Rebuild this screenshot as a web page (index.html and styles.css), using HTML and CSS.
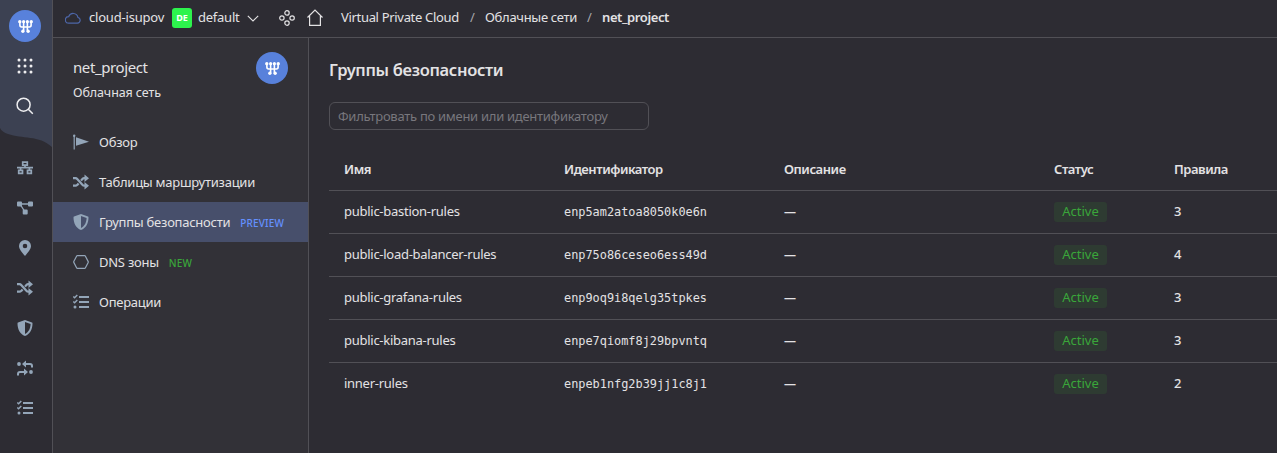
FILE: index.html
```html
<!DOCTYPE html>
<html lang="ru">
<head>
<meta charset="utf-8">
<title>Группы безопасности</title>
<link rel="stylesheet" href="styles.css">
</head>
<body>
<svg class="defs" width="0" height="0">
  <symbol id="vpc" viewBox="0 0 16 16"><g fill="none" stroke="currentColor" stroke-width="1.700"><path d="M2 3v3.500q0 2 1.800 2h8.400q1.800 0 1.800-2V3M6 3v9.500M10 3v9.500"/></g><g fill="currentColor"><circle cx="1.900" cy="2.800" r="1.800"/><circle cx="6" cy="2.800" r="1.700"/><circle cx="10" cy="2.800" r="1.700"/><circle cx="14.100" cy="2.800" r="1.800"/><circle cx="5.200" cy="13" r="1.800"/><circle cx="10.800" cy="13" r="1.800"/></g></symbol>
  <symbol id="shuffle" viewBox="0 0 16 16"><path d="M0 4.200h2.500q1 0 1.700.800l5.200 5.800q.8.900 1.800.900H13M0 11.700h2.500q1 0 1.700-.8L5.600 9.400M8 6.600 9.400 5q.8-.8 1.800-.8H13" fill="none" stroke="currentColor" stroke-width="2.200"/><path d="M11.500.5l4.500 3.700-4.500 3.700zM11.500 8l4.500 3.700-4.500 3.800z" fill="currentColor"/></symbol>
  <symbol id="shield" viewBox="0 0 16 16"><path fill="currentColor" fill-rule="evenodd" d="M8 0l7 2.600q.5.200.5.800C15.500 9 13 14 8 16 3 14 .5 9 .5 3.400q0-.6.5-.8zM8 2v12c3.800-1.800 5.500-5.600 5.600-9.900z"/></symbol>
  <symbol id="tasks" viewBox="0 0 16 16"><path d="M.3 2.500l1.300 1.300L4.300 1M.3 7.500l1.300 1.300L4.300 6" fill="none" stroke="currentColor" stroke-width="1.500"/><circle cx="2" cy="13" r="1.500" fill="currentColor"/><path d="M6 3h10M6 8h10M6 13h10" stroke="currentColor" stroke-width="2"/></symbol>
</svg>
<div class="app">
  <nav class="rail">
    <svg class="rail-bg" width="52" height="150" viewBox="0 0 52 150"><path d="M0 0h52v147C39 135 22 139 8 134Q2 132 0 128z" fill="#3c4152"/></svg>
    <div class="rail-list">
      <span class="badge"><svg width="15" height="15"><use href="#vpc"/></svg></span>
      <svg class="light" width="16" height="16" viewBox="0 0 16 16" fill="currentColor"><circle cx="2" cy="2" r="1.500"/><circle cx="8" cy="2" r="1.500"/><circle cx="14" cy="2" r="1.500"/><circle cx="2" cy="8" r="1.500"/><circle cx="8" cy="8" r="1.500"/><circle cx="14" cy="8" r="1.500"/><circle cx="2" cy="14" r="1.500"/><circle cx="8" cy="14" r="1.500"/><circle cx="14" cy="14" r="1.500"/></svg>
      <svg class="light search" width="18" height="18" viewBox="0 0 18 18" fill="none" stroke="currentColor" stroke-width="1.500"><circle cx="7.600" cy="7.700" r="6.500"/><path d="M12.300 12.300l4.500 4.500"/></svg>
    </div>
    <div class="rail-list lower">
      <svg width="16" height="16" viewBox="0 0 16 16" fill="none" stroke="currentColor" stroke-width="1.700"><path d="M5.700 2.200h4.600v3H5.700zM1.700 10.300h3.800v3H1.700zM10.500 10.300h3.800v3h-3.800zM8 5.500v2M0 7.600h16M3.600 7.600v2.500M12.400 7.600v2.500"/></svg>
      <svg width="16" height="16" viewBox="0 0 16 16"><path d="M2.500 4h11M3 4l5 8" stroke="currentColor" stroke-width="1.400"/><path fill="currentColor" d="M1 1.500h3q1 0 1 1v3q0 1-1 1H1q-1 0-1-1v-3q0-1 1-1zM12 1.500h3q1 0 1 1v3q0 1-1 1h-3q-1 0-1-1v-3q0-1 1-1zM6.700 9.500h3q1 0 1 1v3q0 1-1 1h-3q-1 0-1-1v-3q0-1 1-1z"/></svg>
      <svg width="16" height="16" viewBox="0 0 16 16"><path fill="currentColor" fill-rule="evenodd" d="M8 0a6 6 0 0 1 6 6c0 3-2.400 5.500-6 10C4.400 11.500 2 9 2 6a6 6 0 0 1 6-6zm0 3.700a2.300 2.300 0 1 0 0 4.600 2.300 2.300 0 0 0 0-4.600z"/></svg>
      <svg width="16" height="16"><use href="#shuffle"/></svg>
      <svg width="16" height="16"><use href="#shield"/></svg>
      <svg width="16" height="16" viewBox="0 0 16 16"><g fill="currentColor"><circle cx="2" cy="4" r="1.900"/><circle cx="14" cy="12" r="1.900"/><path d="M5 4l4-3.500v7zM11 12L7 8.500v7z"/></g><path d="M8 4h5q2 0 2 2v1.500M8 12H3q-2 0-2 2v1.500" fill="none" stroke="currentColor" stroke-width="2"/></svg>
      <svg width="16" height="16"><use href="#tasks"/></svg>
    </div>
  </nav>
  <div class="body">
    <header class="topbar">
      <svg class="cloud" width="16" height="12" viewBox="0 0 16 12" fill="none" stroke="currentColor" stroke-width="1.200"><path d="M3.700 11.200h8.600a3 3 0 0 0 .6-5.900A4.800 4.800 0 0 0 3.700 4.600a3.300 3.300 0 0 0 0 6.600z"/></svg>
      <span class="t-cloud">cloud-isupov</span>
      <span class="de">DE</span>
      <span class="t-folder">default</span>
      <svg class="chev" width="12" height="7" viewBox="0 0 12 7" fill="none" stroke="currentColor" stroke-width="1.100"><path d="M.8.800 6 5.900 11.200.800"/></svg>
      <svg class="dots" width="16" height="16" viewBox="0 0 16 16" fill="none" stroke="currentColor" stroke-width="1.200"><circle cx="8" cy="2.900" r="2.200"/><circle cx="2.900" cy="8" r="2.200"/><circle cx="13.100" cy="8" r="2.200"/><circle cx="8" cy="13.100" r="2.200"/></svg>
      <svg class="home" width="16" height="17" viewBox="0 0 16 17" fill="none" stroke="currentColor" stroke-width="1.200"><path d="M.5 8.500 8 1l7.500 7.500M2.600 7v9.300h10.800V7"/></svg>
      <span class="t-vpc">Virtual Private Cloud</span><i class="slash">/</i>
      <span class="t-nets">Облачные сети</span><i class="slash">/</i>
      <b class="t-net">net_project</b>
    </header>
    <div class="content">
      <aside class="side">
        <div class="side-head">
          <div><div class="side-title">net_project</div><div class="side-sub">Облачная сеть</div></div>
          <span class="badge"><svg width="15" height="15"><use href="#vpc"/></svg></span>
        </div>
        <div class="item"><svg width="16" height="16" viewBox="0 0 16 16" fill="currentColor"><circle cx="1.200" cy="1.800" r="1.200"/><path d="M.6 1.500h1.200V15.500H.6zM3 3.300 16 7.800 3 11.800z"/></svg><span class="m-over">Обзор</span></div>
        <div class="item"><svg width="16" height="16"><use href="#shuffle"/></svg><span class="m-route">Таблицы маршрутизации</span></div>
        <div class="item active"><svg width="16" height="16"><use href="#shield"/></svg><span class="m-group">Группы безопасности</span><em class="preview">PREVIEW</em></div>
        <div class="item"><svg width="16" height="16" viewBox="0 0 16 16" fill="none" stroke="currentColor" stroke-width="1.200"><path d="M4.300 1.600h7.400q.4 0 .6.400l2.900 5.600q.2.400 0 .8l-2.900 5.600q-.2.400-.6.400H4.300q-.4 0-.6-.4L.8 8.400q-.2-.4 0-.8L3.700 2q.2-.4.600-.4z"/></svg><span class="m-dns">DNS зоны</span><em class="new">NEW</em></div>
        <div class="item"><svg width="16" height="16"><use href="#tasks"/></svg><span class="m-ops">Операции</span></div>
      </aside>
      <main class="main">
        <h1>Группы безопасности</h1>
        <div class="filter"><span>Фильтровать по имени или идентификатору</span></div>
        <div class="table">
          <div class="row head"><span>Имя</span><span>Идентификатор</span><span>Описание</span><span>Статус</span><span>Правила</span></div>
          <div class="row"><span class="name">public-bastion-rules</span><code>enp5am2atoa8050k0e6n</code><span class="dash">—</span><span><mark>Active</mark></span><span class="count">3</span></div>
          <div class="row"><span class="name">public-load-balancer-rules</span><code>enp75o86ceseo6ess49d</code><span class="dash">—</span><span><mark>Active</mark></span><span class="count">4</span></div>
          <div class="row"><span class="name">public-grafana-rules</span><code>enp9oq9i8qelg35tpkes</code><span class="dash">—</span><span><mark>Active</mark></span><span class="count">3</span></div>
          <div class="row"><span class="name">public-kibana-rules</span><code>enpe7qiomf8j29bpvntq</code><span class="dash">—</span><span><mark>Active</mark></span><span class="count">3</span></div>
          <div class="row"><span class="name">inner-rules</span><code>enpeb1nfg2b39jj1c8j1</code><span class="dash">—</span><span><mark>Active</mark></span><span class="count">2</span></div>
        </div>
      </main>
    </div>
  </div>
</div>
</body>
</html>
```
FILE: styles.css
```css
* { box-sizing: border-box; }
body { margin: 0; background: #2d2c33; color: #e3e2e4; font: 13px/18px "Noto Sans", sans-serif; overflow: hidden; }
svg { display: block; flex: none; }
.defs { position: absolute; }
.app { display: flex; width: 1277px; height: 453px; }
.rail { position: relative; width: 53px; flex: none; border-right: 1px solid #515056; color: #93a5b8; }
.rail-bg { position: absolute; left: 0; top: 0; }
.rail-list { position: relative; display: flex; flex-direction: column; align-items: center; padding: 10px 2px 0 0; }
.badge { display: flex; flex: none; align-items: center; justify-content: center; width: 32px; height: 32px; border-radius: 50%; background: #5881db; color: #fff; }
.light { color: #eeeef0; margin-top: 16px; }
.search { margin-top: 23px; }
.lower { gap: 24px; padding-top: 45px; }
.body { flex: 1; min-width: 0; display: flex; flex-direction: column; }
.topbar { display: flex; align-items: center; height: 38px; padding: 0 0 2px 12px; border-bottom: 1px solid #515056; white-space: nowrap; flex: none; }
.topbar span { flex: none; }
.topbar span:not(.de), .topbar b, .topbar i { padding-bottom: 2px; }
.cloud { color: #4d66a8; }
.t-cloud { width: 76px; margin-left: 8px; letter-spacing: -.2px; }
.topbar .de { width: 20px; height: 20px; margin-left: 7px; border-radius: 3px; background: #2df34d; color: #fff; font-size: 9px; font-weight: 700; line-height: 20px; text-align: center; }
.t-folder { width: 44px; margin-left: 6px; letter-spacing: -.25px; }
.chev { margin: 1px 0 0 5px; }
.dots { margin-left: 20px; }
.home { margin-left: 12px; }
.t-vpc { width: 119px; margin-left: 18px; letter-spacing: -.32px; }
.slash { width: 25px; text-align: center; font-style: normal; color: #a7a6aa; }
.t-nets { width: 92px; letter-spacing: -.3px; }
.t-net { letter-spacing: -.4px; font-weight: 600; }
.content { flex: 1; display: flex; min-height: 0; }
.side { width: 256px; flex: none; border-right: 1px solid #515056; background: #323137; white-space: nowrap; }
.side-head { display: flex; justify-content: space-between; height: 84px; padding: 14px 20px 0; }
.side-title { font-size: 15px; line-height: 30px; padding-bottom: 3px; letter-spacing: -.4px; }
.side-sub { line-height: 16px; font-size: 12.5px; letter-spacing: -.1px; }
.item { display: flex; align-items: center; height: 40px; padding-left: 20px; letter-spacing: -.25px; }
.item svg { color: #93a5b8; margin-right: 10px; }
.item.active { background: #474f6b; }
.item em { font-style: normal; font-size: 10px; margin: 2px 0 0 10px; font-weight: 500; letter-spacing: .15px; }
.preview { color: #6490ff; }
.new { color: #3aa63a; }
.main { flex: 1; min-width: 0; padding: 20px 0 0 20px; }
h1 { margin: 0; font-size: 16.500px; line-height: 24px; font-weight: 600; letter-spacing: -.32px; }
.filter { width: 320px; height: 28px; margin-top: 20px; padding: 0 8px; border: 1px solid #515056; border-radius: 6px; line-height: 27px; color: #78777d; letter-spacing: -.28px; white-space: nowrap; }
.table { margin-top: 18px; }
.row { display: grid; grid-template-columns: 220px 220px 270px 120px 1fr; align-items: center; height: 43px; padding-left: 15px; border-bottom: 1px solid #515056; white-space: nowrap; }
.row:last-child { border-bottom: 0; height: 42px; }
.head { font-weight: 600; letter-spacing: -.45px; }
.name { padding-bottom: 2px; letter-spacing: -.27px; }
.count { padding-bottom: 2px; font-weight: 500; }
.dash { font-size: 12px; font-weight: 600; }
code { font: 11.880px/18px "DejaVu Sans Mono", monospace; }
mark { display: block; width: 53px; height: 20px; border-radius: 3px; background: #2e3b32; color: #3aa63a; line-height: 18px; text-align: center; }
```
